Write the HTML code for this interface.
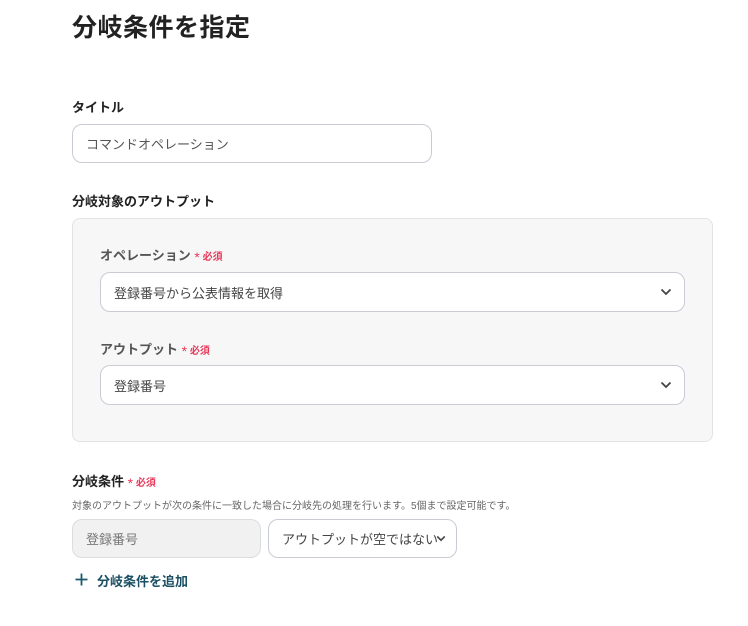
<!DOCTYPE html>
<html><head><meta charset="utf-8"><style>
*{box-sizing:border-box;margin:0;padding:0}
body{width:748px;height:626px;background:#fff;font-family:"Liberation Sans","Noto Sans CJK JP",sans-serif;color:#333;position:relative;overflow:hidden}
.a{position:absolute}
h1{position:absolute;left:72px;top:8px;font-size:25px;font-weight:700;color:#222;letter-spacing:0.5px}
.lbl{font-size:13px;font-weight:700;color:#222}
.lbl2{font-size:13px;font-weight:700;color:#555}
.req{color:#e8385a;font-size:10px;font-weight:700}
.req b{font-size:14px;font-weight:400;position:relative;top:2px}
.box{border:1px solid #c9ccd4;border-radius:10px;background:#fff;font-size:13px;color:#444;display:flex;align-items:center;padding-left:13px}
.chev{position:absolute;right:12px;top:50%;margin-top:-4px}
</style></head><body>
<h1>分岐条件を指定</h1>
<div class="a lbl" style="left:72px;top:97px">タイトル</div>
<div class="a box" style="left:72px;top:124px;width:360px;height:39px;color:#555">コマンドオペレーション</div>
<div class="a lbl" style="left:72px;top:191px">分岐対象のアウトプット</div>
<div class="a" style="left:72px;top:218px;width:641px;height:224px;background:#f7f7f8;border:1px solid #e2e3e6;border-radius:8px"></div>
<div class="a lbl2" style="left:100px;top:245px">オペレーション <span class="req"><b>*</b> 必須</span></div>
<div class="a box" style="left:100px;top:272px;width:585px;height:40px">登録番号から公表情報を取得
<svg class="chev" width="12" height="8" viewBox="0 0 12 8"><path d="M1.5 1.5L6 6l4.5-4.5" fill="none" stroke="#444" stroke-width="1.8"/></svg></div>
<div class="a lbl2" style="left:100px;top:339px">アウトプット <span class="req"><b>*</b> 必須</span></div>
<div class="a box" style="left:100px;top:365px;width:585px;height:40px">登録番号
<svg class="chev" width="12" height="8" viewBox="0 0 12 8"><path d="M1.5 1.5L6 6l4.5-4.5" fill="none" stroke="#444" stroke-width="1.8"/></svg></div>
<div class="a lbl" style="left:72px;top:471px">分岐条件 <span class="req"><b>*</b> 必須</span></div>
<div class="a" style="left:72px;top:497px;font-size:10px;color:#666">対象のアウトプットが次の条件に一致した場合に分岐先の処理を行います。5個まで設定可能です。</div>
<div class="a box" style="left:72px;top:519px;width:189px;height:39px;background:#f1f1f2;border-color:#dcdde0;color:#777">登録番号</div>
<div class="a box" style="left:268px;top:519px;width:189px;height:39px">アウトプットが空ではない
<svg class="chev" style="right:10px" width="10" height="7" viewBox="0 0 12 8"><path d="M1.5 1.5L6 6l4.5-4.5" fill="none" stroke="#444" stroke-width="2"/></svg></div>
<svg class="a" style="left:75px;top:573px" width="13" height="13" viewBox="0 0 13 13"><path d="M6.5 0.5v12M0.5 6.5h12" stroke="#1b5a6e" stroke-width="1.8"/></svg>
<div class="a" style="left:97px;top:571px;font-size:13px;font-weight:700;color:#1b4f63">分岐条件を追加</div>
</body></html>
